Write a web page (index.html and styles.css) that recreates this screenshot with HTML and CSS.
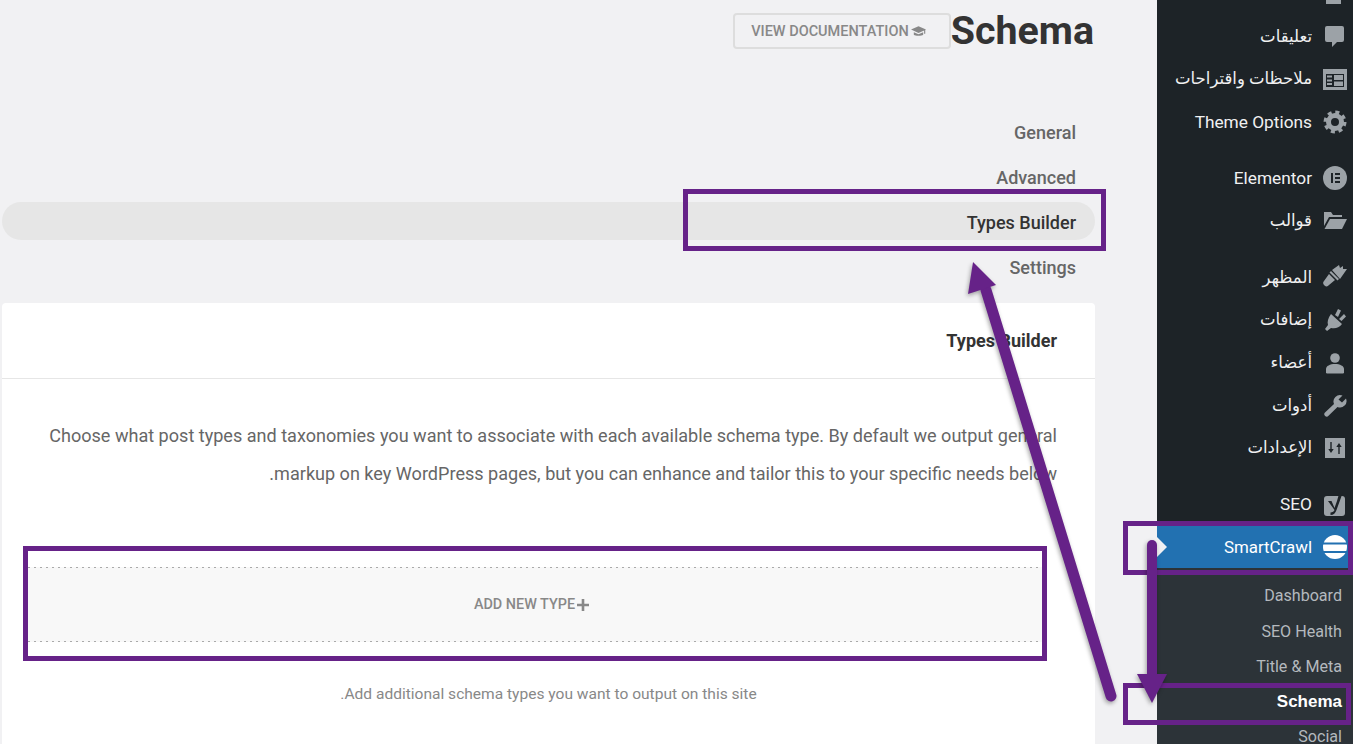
FILE: index.html
```html
<!DOCTYPE html>
<html lang="ar" dir="rtl">
<head>
<meta charset="utf-8">
<title>Schema</title>
<link rel="stylesheet" href="styles.css">
</head>
<body>
<div class="page">
  <aside class="side">
    <ul class="menu">
      <li class="item"><span class="ico"><svg viewBox="0 0 24 24"><path d="M3 3h15v19H3z"/></svg></span></li>
      <li class="item"><span class="ico"><svg viewBox="0 0 24 24"><path d="M4 2h15a2 2 0 0 1 2 2v12a2 2 0 0 1-2 2h-5l-5 5v-5H4a2 2 0 0 1-2-2V4a2 2 0 0 1 2-2z"/></svg></span><span class="ar">تعليقات</span></li>
      <li class="item"><span class="ico"><svg viewBox="0 0 24 24"><path d="M0 2h24v21H0z"/><path class="dark" d="M3 7h18v13H3z"/><path d="M4 8.500h5v2H4zM11 8h9v5h-9zM4 12.500h5v2H4zM4 16h5v2H4zM11 14.500h9V19h-9z"/></svg></span><span class="ar">ملاحظات واقتراحات</span></li>
      <li class="item"><span class="ico"><svg viewBox="0 0 24 24"><circle class="ring" cx="12" cy="12" r="6.500"/><circle class="teeth" cx="12" cy="12" r="9.500"/></svg></span><span>Theme Options</span></li>
      <li class="sep"></li>
      <li class="item"><span class="ico"><svg viewBox="0 0 24 24"><circle cx="12" cy="12" r="12"/><path class="dark" d="M8 7h2v10H8zM12 7h5v2h-5zM12 11h5v2h-5zM12 15h5v2h-5z"/></svg></span><span>Elementor</span></li>
      <li class="item"><span class="ico"><svg viewBox="0 0 24 24"><path d="M1 3h7l2 3h9v2H6L1 17z"/><path d="M7 10h17l-5 10H1.500z"/></svg></span><span class="ar">قوالب</span></li>
      <li class="sep"></li>
      <li class="item"><span class="ico"><svg viewBox="0 0 24 24"><path d="M9 5 16 0l1 3 3-2v3h4l-7 10z"/><path d="M8 6l8 8-1.500 1.500-8-8z"/><path d="M6 9l6 6-6 5a3 3 0 0 1-5-4z"/></svg></span><span class="ar">المظهر</span></li>
      <li class="item"><span class="ico"><svg viewBox="0 0 24 24"><path d="M12 7l3-6 3 1.500L15 9zM16 11l5-5 2 2.500-4.500 4.500z"/><path d="M8 6 19 16c-3 4-7 5-11 4l-4 3-2-2 3-4c-1-3 0-7 3-11z"/></svg></span><span class="ar">إضافات</span></li>
      <li class="item"><span class="ico"><svg viewBox="0 0 24 24"><circle cx="12" cy="7" r="4.800"/><path d="M3 22v-4c0-3 4-5 9-5s9 2 9 5v4l-1 .5H4z"/></svg></span><span class="ar">أعضاء</span></li>
      <li class="item"><span class="ico"><svg viewBox="0 0 24 24"><path d="M23 5.500l-4 4-3.500-3 4-4a6.500 6.500 0 0 0-8.500 8.500L2 19.500a2.400 2.400 0 0 0 3.500 3.300l9-8.800A6.500 6.500 0 0 0 23 5.500z"/></svg></span><span class="ar">أدوات</span></li>
      <li class="item"><span class="ico"><svg viewBox="0 0 24 24"><path d="M2 2h20v20H2z"/><path class="dark" d="M7.300 6h1.400v7h2l-2.700 4-2.700-4h2zM15.300 18v-7h-2L16 7l2.700 4h-2v7z"/></svg></span><span class="ar">الإعدادات</span></li>
      <li class="sep"></li>
      <li class="item"><span class="ico"><svg viewBox="0 0 24 24"><path d="M4 4h15a3 3 0 0 1 3 3v14a3 3 0 0 1-3 3H4a3 3 0 0 1-3-3V7a3 3 0 0 1 3-3z"/><path class="dark" d="M5 9h3.500l3 7L14 9l2.500-9H20l-6.500 18c-1 3-3 5-6 5v-2.500c2 0 3.500-1 4-2.500z"/></svg></span><span>SEO</span></li>
      <li class="item current"><span class="ico"><svg viewBox="0 0 24 24"><circle class="white" cx="12" cy="12" r="12"/><path class="band" d="M0 7.500h24v2H0zM0 16h24v2H0z"/></svg></span><span class="sc">SmartCrawl</span></li>
    </ul>
    <ul class="sub">
      <li class="sub-item">Dashboard</li>
      <li class="sub-item">SEO Health</li>
      <li class="sub-item">Title &amp; Meta</li>
      <li class="sub-item strong">Schema</li>
      <li class="sub-item">Social</li>
    </ul>
  </aside>

  <main class="main">
    <header class="head">
      <h1 class="title" dir="ltr">Schema</h1>
      <a class="doc-btn">
        <svg class="cap" viewBox="0 0 16 12"><path d="M8 1 0 4.500 8 8l6-2.600V9h1.200V4.900L16 4.500z"/><path d="M3 7.200V10c1.500 1.500 8.500 1.500 10 0V7.200L8 9.400z"/></svg>
        <span dir="ltr">VIEW DOCUMENTATION</span>
      </a>
    </header>
    <nav class="tabs">
      <a class="tab">General</a>
      <a class="tab">Advanced</a>
      <a class="tab active">Types Builder</a>
      <a class="tab">Settings</a>
    </nav>
    <section class="card">
      <div class="card-head">Types Builder</div>
      <div class="card-body">
        <p class="intro">Choose what post types and taxonomies you want to associate with each available schema type. By default we output general markup on key WordPress pages, but you can enhance and tailor this to your specific needs below.</p>
        <div class="add-box">
          <svg class="plus" viewBox="0 0 12 12"><path d="M4.700 0h2.600v4.700H12v2.600H7.300V12H4.700V7.300H0V4.700h4.700z"/></svg>
          <span dir="ltr">ADD NEW TYPE</span>
        </div>
        <p class="hint">Add additional schema types you want to output on this site.</p>
      </div>
    </section>
  </main>

  <svg class="notes" viewBox="0 0 1353 744" aria-hidden="true">
    <rect class="frame" x="685.500" y="191.500" width="418" height="57"/>
    <rect class="frame" x="25.500" y="548.500" width="1019" height="110"/>
    <rect class="frame" x="1125.500" y="523.500" width="225" height="49"/>
    <rect class="frame" x="1125.500" y="685.500" width="223" height="37"/>
    <g class="arrow">
      <path class="shaft" d="M1111 696 986 290"/>
      <path class="head-tip" d="M973 262 996 285 968 294z"/>
    </g>
    <g class="arrow">
      <path class="shaft thin" d="M1152 545V680"/>
      <path class="head-tip" d="M1137 674H1167L1152 703z"/>
    </g>
  </svg>
</div>
</body>
</html>
```
FILE: styles.css
```css
* { box-sizing: border-box; }
html, body { margin: 0; height: 100%; }
body {
  background: #f1f1f3;
  font-family: Roboto, "DejaVu Sans", sans-serif;
  overflow: hidden;
}
.page {
  position: relative;
  display: flex;
  width: 1353px;
  height: 744px;
  overflow: hidden;
}

/* Sidebar */
.side {
  flex: 0 0 196px;
  height: 744px;
  overflow: hidden;
  background: #1d2327;
  color: #f0f0f1;
}
.menu, .sub { list-style: none; margin: 0; padding: 0; }
.menu { margin-top: -27.500px; }
.item {
  display: flex;
  align-items: center;
  gap: 11px;
  height: 42.6px;
  padding-right: 6px;
  font-size: 17.300px;
}
.ar { font-size: 16.500px; }
.sc { font-size: 16.900px; }
.sep { height: 14px; }
.ico { flex: 0 0 24px; width: 24px; height: 24px; display: block; }
.ico svg { display: block; width: 24px; height: 24px; fill: #9ca2a7; }
.ico .dark { fill: #1d2327; }
.ico .white { fill: #fff; }
.ico .band { fill: #2271b1; }
.ico .ring { fill: none; stroke: #9ca2a7; stroke-width: 5; }
.ico .teeth { fill: none; stroke: #9ca2a7; stroke-width: 4; stroke-dasharray: 3.900 3.560; }
.current {
  position: relative;
  background: #2271b1;
  color: #fff;
}
.current::after {
  content: "";
  position: absolute;
  left: 0;
  top: 50%;
  margin-top: -10px;
  border-style: solid;
  border-width: 10px 0 10px 10px;
  border-color: transparent transparent transparent #f1f1f3;
}
.sub {
  background: #2c3338;
  padding-top: 10px;
  height: 200px;
}
.sub-item {
  height: 35.3px;
  line-height: 35px;
  padding-right: 11px;
  font-size: 16.100px;
  color: #b4b9be;
}
.sub-item.strong {
  font-family: "Liberation Sans", sans-serif;
  font-size: 17px;
  font-weight: 700;
  color: #fff;
}

/* Main */
.main {
  flex: 0 0 1157px;
  padding: 13px 62px 0 2px;
}
.head { display: flex; align-items: center; height: 36px; margin-right: 1px; }
.title {
  margin: 0;
  flex: 0 0 143px;
  font-size: 39.400px;
  font-weight: 700;
  line-height: 36px;
  color: #333;
}
.doc-btn {
  display: flex;
  align-items: center;
  gap: 2px;
  width: 218px;
  height: 36px;
  padding-right: 23px;
  border: 2px solid #ddd;
  border-radius: 4px;
  font-size: 14.500px;
  font-weight: 500;
  color: #888;
}
.cap { width: 15px; height: 12px; fill: #888; }
.tabs {
  display: flex;
  flex-direction: column;
  gap: 7px;
  margin-top: 63px;
}
.tab {
  height: 38px;
  line-height: 42px;
  padding: 0 19px;
  border-radius: 19px;
  font-size: 18px;
  font-weight: 500;
  color: #666;
}
.tab.active { background: #e6e6e6; color: #333; }
.card {
  margin-top: 18px;
  height: 600px;
  background: #fff;
  border-radius: 4px;
}
.card-head {
  height: 76px;
  line-height: 75px;
  padding: 0 38px;
  border-bottom: 1px solid #e6e6e6;
  font-size: 18px;
  font-weight: 700;
  color: #333;
}
.card-body { padding: 38px 38px 0; }
.intro {
  margin: 0;
  font-size: 18.070px;
  line-height: 38px;
  color: #666;
}
.add-box {
  display: flex;
  align-items: center;
  justify-content: center;
  gap: 2px;
  height: 75px;
  margin: 74px 15px 0 -12px;
  padding: 0 7px 0 0;
  background:
    repeating-linear-gradient(to right, #aaa 0 2px, transparent 2px 6px) top / 100% 1px no-repeat,
    repeating-linear-gradient(to right, #aaa 0 2px, transparent 2px 6px) bottom / 100% 1px no-repeat,
    #f8f8f8;
  font-size: 14.400px;
  font-weight: 500;
  color: #888;
}
.plus { width: 12px; height: 12px; fill: #888; }
.hint {
  margin: 40px 0 0;
  font-size: 15.550px;
  line-height: 24px;
  text-align: center;
  color: #888;
}

/* Annotations drawn over the screenshot */
.notes {
  position: absolute;
  left: 0;
  top: 0;
  width: 1353px;
  height: 744px;
  pointer-events: none;
}
.frame { fill: none; stroke: #662288; stroke-width: 5; }
.arrow { filter: drop-shadow(-1px 2px 2px rgba(0, 0, 0, .35)); }
.shaft { fill: none; stroke: #662288; stroke-width: 11; stroke-linecap: round; }
.shaft.thin { stroke-width: 10; }
.head-tip { fill: #662288; }
```
